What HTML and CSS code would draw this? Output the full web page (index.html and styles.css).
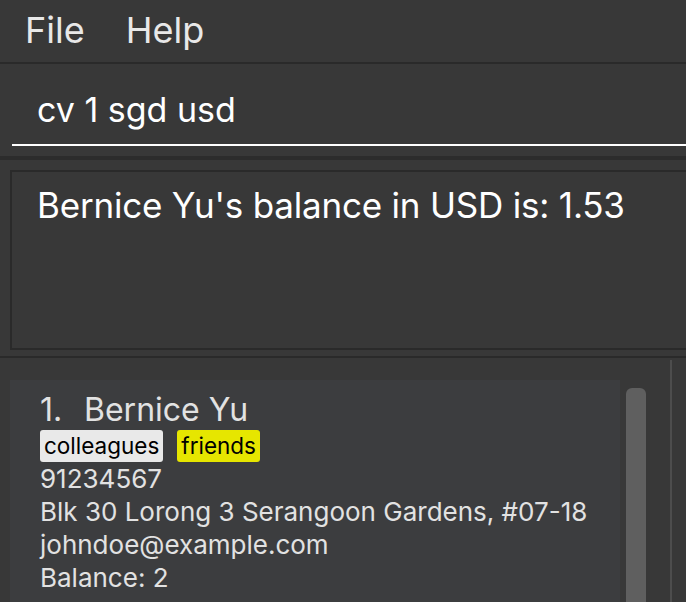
FILE: index.html
```html
<!DOCTYPE html>
<html>
<head>
<meta charset="utf-8">
<link rel="stylesheet" href="styles.css">
</head>
<body>
<div class="app">
  <div class="menubar">
    <span class="menu-item">File</span>
    <span class="menu-item">Help</span>
  </div>
  <div class="command">
    <div class="cmd-input">cv 1 sgd usd</div>
  </div>
  <div class="band"></div>
  <div class="result-wrap">
    <div class="result">Bernice Yu's balance in USD is: 1.53</div>
  </div>
  <div class="split">
    <div class="list-pane">
      <div class="card">
        <div class="name"><span class="index">1.</span>Bernice Yu</div>
        <div class="tags">
          <span class="tag tag-grey">colleagues</span>
          <span class="tag tag-yellow">friends</span>
        </div>
        <div class="field">91234567</div>
        <div class="field">Blk 30 Lorong 3 Serangoon Gardens, #07-18</div>
        <div class="field">johndoe@example.com</div>
        <div class="field">Balance: 2</div>
      </div>
      <div class="scrollbar"><div class="thumb"></div></div>
    </div>
    <div class="side-pane"></div>
  </div>
</div>
</body>
</html>
```

FILE: styles.css
```css
html, body {
  margin: 0;
  padding: 0;
}
body {
  background: #383838;
  font-family: Inter, "Liberation Sans", sans-serif;
  width: 686px;
  height: 602px;
  overflow: hidden;
}
.app {
  display: flex;
  flex-direction: column;
  width: 686px;
  height: 602px;
}
.menubar {
  height: 62px;
  border-bottom: 2px solid #2a2a2a;
  display: flex;
  gap: 41px;
  padding-left: 25px;
  color: #e8e8e8;
  font-size: 36px;
  line-height: 60px;
}
.command {
  height: 82px;
  padding: 0 0 10px 12px;
}
.cmd-input {
  height: 54px;
  padding: 26px 0 0 25px;
  border-bottom: 2px solid #ffffff;
  color: #ffffff;
  font-size: 34px;
  line-height: 40px;
}
.band {
  height: 4px;
  background: #2c2c2c;
}
.result-wrap {
  height: 186px;
  padding: 10px 0 0 10px;
  border-bottom: 2px solid #2a2a2a;
  overflow: hidden;
}
.result {
  height: 165px;
  margin-right: -20px;
  border: 2px solid #2a2a2a;
  padding: 11px 0 0 25px;
  color: #ffffff;
  font-size: 35px;
  letter-spacing: -0.2px;
  line-height: 44px;
}
.split {
  flex: 1;
  display: flex;
  padding-top: 2px;
  min-height: 0;
}
.list-pane {
  width: 670px;
  display: flex;
  gap: 6px;
  padding: 20px 0 0 10px;
  box-sizing: border-box;
}
.card {
  width: 580px;
  padding: 10px 0 0 30px;
  background: #3c3d3f;
  color: #e2e2e2;
}
.name {
  font-size: 32px;
  line-height: 40px;
}
.index {
  display: inline-block;
  width: 44px;
}
.tags {
  display: flex;
  gap: 14px;
  height: 32px;
}
.tag {
  height: 32px;
  padding: 0 4px;
  border-radius: 3px;
  color: #000000;
  font-size: 22.5px;
  line-height: 32px;
}
.tag-grey {
  background: #e9e9e9;
}
.tag-yellow {
  background: #e6e600;
}
.field {
  font-size: 26px;
  line-height: 33px;
}
.scrollbar {
  width: 20px;
  padding-top: 8px;
}
.thumb {
  height: 100%;
  background: #5f5f5f;
  border-radius: 6px 6px 0 0;
}
.side-pane {
  flex: 1;
  border-left: 2px solid #4d4d4d;
}
```
